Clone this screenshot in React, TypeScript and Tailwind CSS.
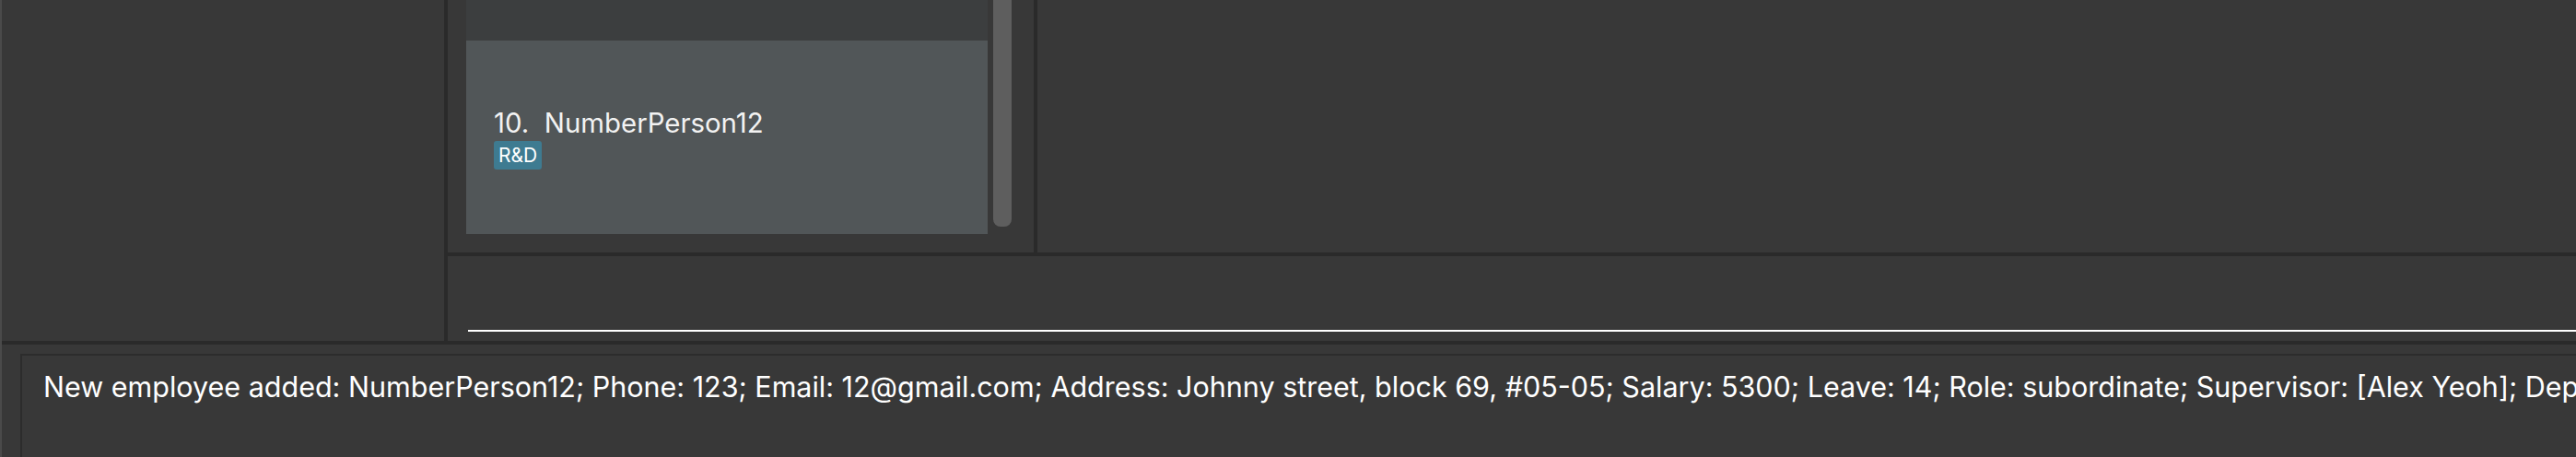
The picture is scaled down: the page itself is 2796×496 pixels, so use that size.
import React from "react";

export default function App() {
  const font = { fontFamily: "Inter, 'Noto Sans', sans-serif" };
  return (
    <div
      className="w-[2796px] h-[496px] overflow-hidden bg-[#383838] flex flex-col text-white"
      style={font}
    >
      <div className="flex h-[370px] shrink-0">
        <div className="w-[2px] bg-[#4a4a4a] shrink-0" />
        <div className="w-[480px] shrink-0 bg-[#383838]" />
        <div className="w-[4px] shrink-0 bg-[#2a2a2a]" />
        <div className="flex-1 flex flex-col min-w-0">
          <div className="flex h-[274px] shrink-0">
            <div className="w-[636px] shrink-0 flex pl-[20px]">
              <div className="w-[566px] flex flex-col">
                <div className="h-[44px] bg-[#3c3e3f]" />
                <div className="h-[210px] bg-[#515658] flex flex-col justify-center pl-[30px] pt-[2px]">
                  <div className="text-[29.4px] leading-[34px] text-[#f2f2f2] whitespace-nowrap">
                    10.&nbsp;&nbsp;NumberPerson12
                  </div>
                  <div className="flex mt-[2px]">
                    <span className="bg-[#3e7b91] text-white text-[21px] leading-[31px] px-[5px] rounded-[3px]">
                      R&amp;D
                    </span>
                  </div>
                </div>
              </div>
              <div className="ml-[6px] w-[20px] h-[246px] bg-[#5e5e5e] rounded-b-[8px]" />
            </div>
            <div className="w-[4px] shrink-0 bg-[#2a2a2a]" />
            <div className="flex-1 bg-[#383838]" />
          </div>
          <div className="h-[4px] shrink-0 bg-[#2a2a2a]" />
          <div className="flex-1 flex flex-col justify-end pl-[22px] pb-[10px]">
            <div className="h-[2px] bg-white" />
          </div>
        </div>
      </div>
      <div className="flex h-[4px] shrink-0">
        <div className="w-[2px] bg-[#4a4a4a]" />
        <div className="flex-1 bg-[#2a2a2a]" />
      </div>
      <div className="flex flex-1">
        <div className="w-[2px] bg-[#4a4a4a] shrink-0" />
        <div className="flex-1 pl-[20px] pt-[10px] min-w-0">
          <div className="h-full border-l-2 border-t-2 border-[#2c2c2c] pl-[23px] pt-[15px] overflow-hidden">
            <div className="text-[30.5px] leading-[38px] whitespace-nowrap text-white">
              New employee added: NumberPerson12; Phone: 123; Email: 12@gmail.com; Address: Johnny street, block 69, #05-05; Salary: 5300; Leave: 14; Role: subordinate; Supervisor: [Alex Yeoh]; Department: [R&amp;D]
            </div>
          </div>
        </div>
      </div>
    </div>
  );
}
